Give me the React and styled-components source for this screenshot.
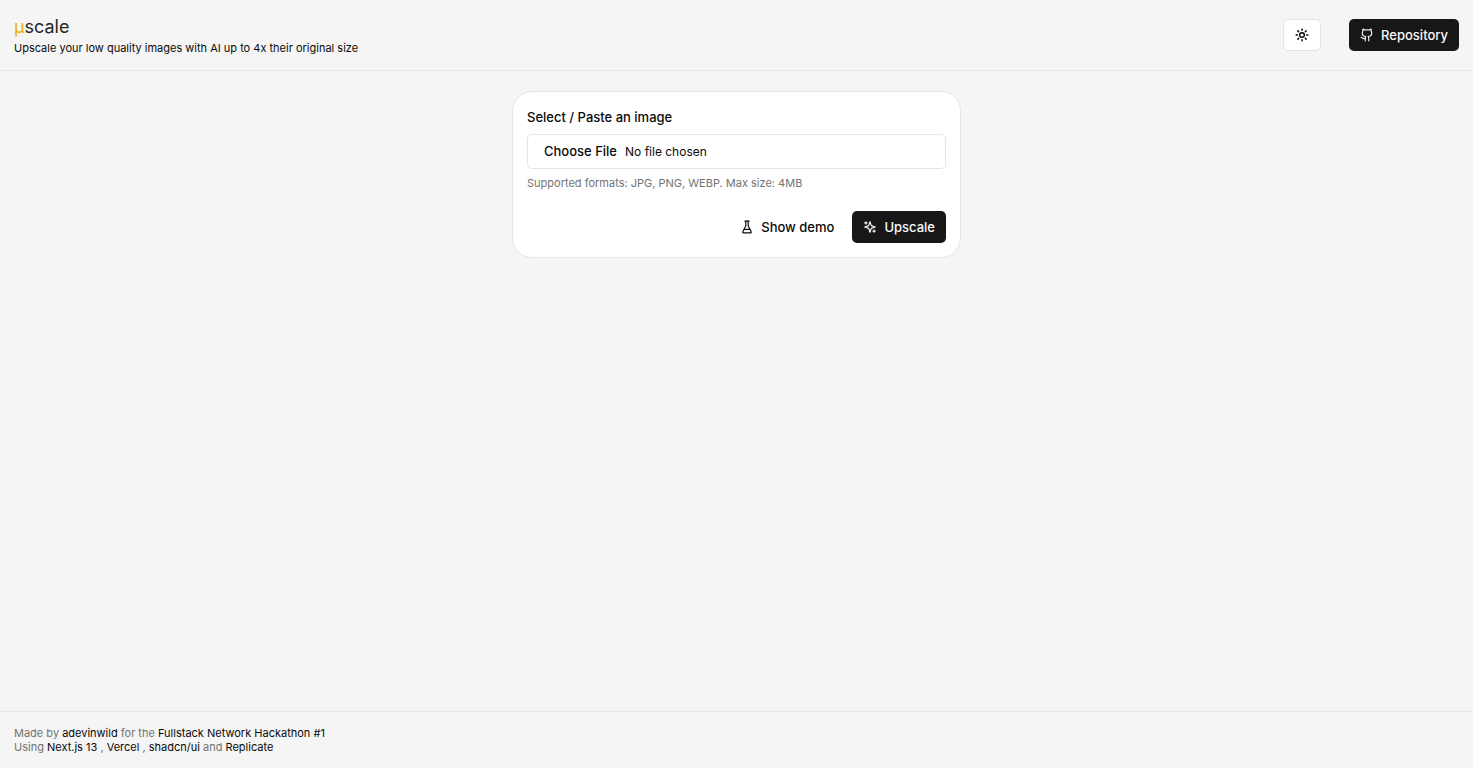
import React from "react";
import styled, { createGlobalStyle } from "styled-components";
import { Github, Sun } from "lucide-react";

const App = () => {
  return (
    <>
      <GlobalStyle />
      <Page>
        <Header>
          <div>
            <Logo>
              <span>µ</span>scale
            </Logo>
            <Tagline>
              Upscale your low quality images with AI up to 4x their original
              size
            </Tagline>
          </div>
          <HeaderActions>
            <IconButton type="button" aria-label="Toggle theme">
              <Sun size={14} strokeWidth={2.5} />
            </IconButton>
            <RepoLink href="#repository">
              <Github size={14} />
              Repository
            </RepoLink>
          </HeaderActions>
        </Header>

        <Main>
          <Card>
            <Label htmlFor="image">Select / Paste an image</Label>
            <FileInput id="image" type="file" accept=".jpg,.png,.webp" />
            <Hint>Supported formats: JPG, PNG, WEBP. Max size: 4MB</Hint>
            <CardActions>
              <Button type="button">
                <Icon viewBox="0 0 24 24" aria-hidden="true">
                  <path d="M10 2v7.527a2 2 0 0 1-.211.896L4.72 20.55a1 1 0 0 0 .9 1.45h12.76a1 1 0 0 0 .9-1.45l-5.069-10.127A2 2 0 0 1 14 9.527V2" />
                  <path d="M8.5 2h7" />
                  <path d="M7 16h10" />
                </Icon>
                Show demo
              </Button>
              <Button type="submit" $primary>
                <Icon viewBox="0 0 24 24" aria-hidden="true">
                  <path d="m12 3-1.912 5.813a2 2 0 0 1-1.275 1.275L3 12l5.813 1.912a2 2 0 0 1 1.275 1.275L12 21l1.912-5.813a2 2 0 0 1 1.275-1.275L21 12l-5.813-1.912a2 2 0 0 1-1.275-1.275L12 3Z" />
                  <path d="M5 3v4" />
                  <path d="M19 17v4" />
                  <path d="M3 5h4" />
                  <path d="M17 19h4" />
                </Icon>
                Upscale
              </Button>
            </CardActions>
          </Card>
        </Main>

        <Footer>
          <p>
            Made by <a href="#adevinwild">adevinwild</a> for the{" "}
            <a href="#hackathon">Fullstack Network Hackathon #1</a>
          </p>
          <p>
            Using <a href="#next">Next.js 13</a> , <a href="#vercel">Vercel</a>{" "}
            , <a href="#shadcn">shadcn/ui</a> and{" "}
            <a href="#replicate">Replicate</a>
          </p>
        </Footer>
      </Page>
    </>
  );
};

export default App;

const GlobalStyle = createGlobalStyle`
  *,
  *::before,
  *::after {
    box-sizing: border-box;
  }

  body {
    margin: 0;
    background-color: #f5f5f5;
    color: #0a0a0a;
    font-family: Inter, "Liberation Sans", sans-serif;
  }

  h1,
  p {
    margin: 0;
  }

  a {
    color: inherit;
    text-decoration: none;
  }
`;

const Page = styled.div`
  display: flex;
  flex-direction: column;
  min-height: 100vh;
`;

const Header = styled.header`
  display: flex;
  justify-content: space-between;
  align-items: center;
  padding: 14px;
  border-bottom: 1px solid #e5e5e5;
`;

const Logo = styled.h1`
  font-size: 18px;
  font-weight: 400;
  line-height: 26px;
  color: #262626;

  span {
    color: #eab308;
  }
`;

const Tagline = styled.p`
  font-size: 11px;
  line-height: 16px;
`;

const HeaderActions = styled.div`
  display: flex;
  align-items: center;
  gap: 28px;
`;

const Icon = styled.svg`
  width: 14px;
  height: 14px;
  fill: none;
  stroke: currentColor;
  stroke-width: 2;
  stroke-linecap: round;
  stroke-linejoin: round;
`;

const Button = styled.button`
  display: inline-flex;
  align-items: center;
  justify-content: center;
  gap: 7px;
  height: 32px;
  padding: 0 11px;
  border: none;
  border-radius: 5px;
  background-color: ${(props) => (props.$primary ? "#171717" : "transparent")};
  color: ${(props) => (props.$primary ? "#fafafa" : "#0a0a0a")};
  font-family: inherit;
  font-size: 13px;
  font-weight: 500;
  line-height: 20px;
  cursor: pointer;
`;

const RepoLink = styled(Button).attrs({ as: "a", $primary: true })``;

const IconButton = styled(Button)`
  width: 38px;
  padding: 0;
  border: 1px solid #e5e5e5;
  background-color: #ffffff;
`;

const Main = styled.main`
  display: flex;
  flex: 1;
  flex-direction: column;
  align-items: center;
  padding: 20px 14px;
`;

const Card = styled.form`
  display: flex;
  flex-direction: column;
  width: 100%;
  max-width: 449px;
  padding: 14px;
  border: 1px solid #e5e5e5;
  border-radius: 20px;
  background-color: #ffffff;
`;

const Label = styled.label`
  margin-bottom: 6px;
  font-size: 13px;
  font-weight: 500;
  line-height: 22px;
`;

const FileInput = styled.input`
  width: 100%;
  height: 35px;
  padding: 6px 12px;
  border: 1px solid #e5e5e5;
  border-radius: 5px;
  background-color: transparent;
  color: #0a0a0a;
  font-family: inherit;
  font-size: 12px;
  line-height: 20px;

  &::file-selector-button {
    margin-right: 4px;
    padding: 0 4px;
    border: 0;
    background-color: transparent;
    color: inherit;
    font-family: inherit;
    font-size: 13px;
    font-weight: 500;
    line-height: 20px;
  }
`;

const Hint = styled.p`
  margin-top: 6px;
  font-size: 11px;
  line-height: 16px;
  color: #737373;
`;

const CardActions = styled.div`
  display: flex;
  justify-content: flex-end;
  gap: 7px;
  margin-top: 20px;
`;

const Footer = styled.footer`
  padding: 14px;
  border-top: 1px solid #e5e5e5;
  font-size: 11px;
  line-height: 14px;
  color: #737373;

  a {
    color: #0a0a0a;
  }
`;
